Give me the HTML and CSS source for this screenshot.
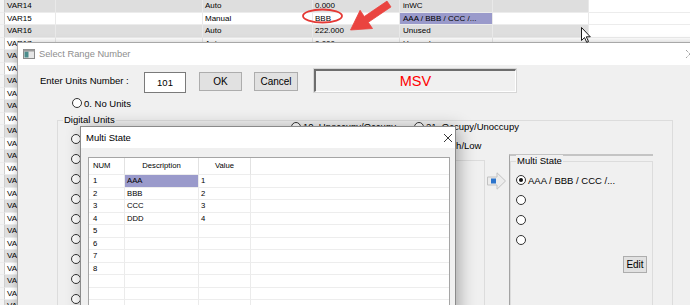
FILE: index.html
```html
<!DOCTYPE html>
<html lang="en">
<head>
  <meta charset="UTF-8">
  <title>Select Range Number</title>
  <link rel="stylesheet" href="styles.css">
</head>
<body>

  <!-- variable list behind the dialogs -->
  <div id="sheet" class="sheet"></div>

  <!-- Select Range Number dialog -->
  <div class="range-dlg">
    <div class="titlebar">
      <svg class="app-icon" width="12" height="10" viewBox="0 0 12 10">
        <rect x="0.5" y="0.5" width="11" height="9" fill="#e6e6e6" stroke="#8a8a8a"/>
        <rect x="1.5" y="2.5" width="4" height="6" fill="#4b8c8c"/>
        <rect x="0.5" y="0.5" width="11" height="2" fill="#9a9a9a"/>
      </svg>
      <span class="title-text">Select Range Number</span>
      <svg class="close-x" width="10" height="10" viewBox="0 0 10 10">
        <path d="M1 1 L9 9 M9 1 L1 9" stroke="#777" stroke-width="1" stroke-dasharray="1 1"/>
      </svg>
    </div>

    <div class="range-body">
      <div class="entry-row">
        <span class="entry-label">Enter Units Number :</span>
        <span class="units-input">101</span>
        <button class="btn ok-btn">OK</button>
        <button class="btn cancel-btn">Cancel</button>
        <div class="msv-box">MSV</div>
      </div>

      <div class="radio-row no-units">
        <span class="radio"></span><span>0. No Units</span>
      </div>

      <div class="group digital">
        <span class="group-label">Digital Units</span>
        <div class="du-body">
          <div class="col1">
            <div class="radio-row tall"><span class="radio"></span><span>1. Off/On</span></div>
            <div class="radio-row tall"><span class="radio"></span><span>2. Close/Open</span></div>
            <div class="radio-row tall"><span class="radio"></span><span>3. Stop/Start</span></div>
            <div class="radio-row tall"><span class="radio"></span><span>4. Disable/Enable</span></div>
            <div class="radio-row tall"><span class="radio"></span><span>5. Normal/Alarm</span></div>
            <div class="radio-row tall"><span class="radio"></span><span>6. Normal/High</span></div>
            <div class="radio-row tall"><span class="radio"></span><span>7. Normal/Low</span></div>
            <div class="radio-row tall"><span class="radio"></span><span>8. No/Yes</span></div>
            <div class="radio-row tall"><span class="radio"></span><span>9. Cool/Heat</span></div>
          </div>

          <div class="du-right">
            <div class="top-row">
              <div class="col2">
                <div class="radio-row mid"><span class="radio"></span><span>10. Unoccupy/Occupy</span></div>
                <div class="radio-row mid"><span class="radio"></span><span>11. Dehumidify/Humidify</span></div>
              </div>
              <div class="col3">
                <div class="radio-row mid"><span class="radio"></span><span>21. Occupy/Unoccupy</span></div>
                <div class="radio-row mid"><span class="radio"></span><span>22. High/Low</span></div>
              </div>
            </div>

            <div class="lower-row">
              <div class="frame"></div>
              <svg class="move-icon" width="19" height="18" viewBox="0 0 19 18">
                <polygon points="0.5,5 10,5 10,0.8 18.5,9 10,17.2 10,13 0.5,13" fill="#ececec" stroke="#c2c2c2"/>
                <rect x="4" y="6.5" width="5" height="5" fill="#2b74cc"/>
              </svg>
              <div class="ms-panel">
                <div class="group ms-group">
                  <span class="group-label">Multi State</span>
                  <div class="ms-radios">
                    <div class="radio-row tall"><span class="radio checked"></span><span>AAA / BBB / CCC /...</span></div>
                    <div class="radio-row tall"><span class="radio"></span></div>
                    <div class="radio-row tall"><span class="radio"></span></div>
                    <div class="radio-row tall"><span class="radio"></span></div>
                  </div>
                  <button class="btn edit-btn">Edit</button>
                </div>
              </div>
            </div>
          </div>
        </div>
      </div>
    </div>
  </div>

  <!-- Multi State dialog -->
  <div class="ms-dlg">
    <div class="titlebar ms-title">
      <span>Multi State</span>
      <svg class="ms-close" width="10" height="10" viewBox="0 0 10 10">
        <path d="M1 1 L9 9 M9 1 L1 9" stroke="#222" stroke-width="0.9"/>
      </svg>
    </div>
    <div class="ms-body">
      <div id="stateGrid" class="state-grid">
        <div class="grid-row grid-head">
          <span class="g-num">NUM</span>
          <span class="g-desc">Description</span>
          <span class="g-val">Value</span>
          <span class="g-rest"></span>
        </div>
      </div>
    </div>
  </div>

  <!-- annotation marks over the screenshot -->
  <svg class="marks" width="690" height="50" viewBox="0 0 690 50">
    <ellipse cx="322.5" cy="16" rx="19.5" ry="6.5" fill="none" stroke="#e53935" stroke-width="1.8"/>
    <polygon points="350.5,30 360.1,10.3 364.3,16.5 387,1.1 391,6.9 368.3,22.3 372.5,28.5" fill="#ea4440" stroke="#ea4440" stroke-width="0.8" stroke-linejoin="round"/>
    <path d="M581.5 27.5 L581.5 40.5 L584.5 37.6 L586.7 42.3 L588.5 41.5 L586.3 36.8 L590.3 36.8 Z" fill="#fff" stroke="#000" stroke-width="0.9" stroke-linejoin="round"/>
  </svg>

  <script>
    const sheetRows = [
      ['VAR14', 'Auto', '0.000', 'inWC'],
      ['VAR15', 'Manual', 'BBB', 'AAA / BBB / CCC /...'],
      ['VAR16', 'Auto', '222.000', 'Unused']
    ];
    for (let n = 17; n <= 38; n++) {
      sheetRows.push(['VAR' + n, 'Auto', '0.000', 'Unused']);
    }

    const states = [
      ['1', 'AAA', '1'], ['2', 'BBB', '2'], ['3', 'CCC', '3'], ['4', 'DDD', '4'],
      ['5', '', ''], ['6', '', ''], ['7', '', ''], ['8', '', ''],
      ['', '', ''], ['', '', ''], ['', '', ''], ['', '', '']
    ];

    function renderSheet() {
      const sheet = document.getElementById('sheet');
      sheetRows.forEach((r, i) => {
        const row = document.createElement('div');
        row.className = i % 2 === 0 ? 'row alt' : 'row';
        row.innerHTML = `
          <span class="c0"></span><span class="c1">${r[0]}</span><span class="c2"></span>
          <span class="c3">${r[1]}</span><span class="c4">${r[2]}</span>
          <span class="c5${i === 1 ? ' sel' : ''}">${r[3]}</span>
          <span class="c6"></span><span class="c7"></span>`;
        sheet.appendChild(row);
      });
    }

    function renderStates() {
      const grid = document.getElementById('stateGrid');
      states.forEach((s, i) => {
        const row = document.createElement('div');
        row.className = 'grid-row';
        row.innerHTML = `
          <span class="g-num">${s[0]}</span>
          <span class="g-desc${i === 0 ? ' sel' : ''}">${s[1]}</span>
          <span class="g-val">${s[2]}</span>
          <span class="g-rest"></span>`;
        grid.appendChild(row);
      });
    }

    renderSheet();
    renderStates();
  </script>

</body>
</html>
```

FILE: styles.css
```css
body {
  margin: 0;
  width: 690px;
  height: 305px;
  overflow: hidden;
  position: relative;
  font-family: "Liberation Sans", Arial, sans-serif;
  font-size: 9.5px;
  color: #000;
  background: #fff;
}

/* background variable list */
.sheet {
  width: 690px;
}
.row {
  display: flex;
  height: 12.5px;
  line-height: 12px;
  font-size: 8px;
  background: #fff;
}
.row span {
  box-sizing: border-box;
  height: 12.5px;
  padding-left: 2px;
  border-right: 1px solid #e9e9e9;
  border-bottom: 1px solid #ececec;
  white-space: nowrap;
  overflow: hidden;
}
.row.alt span {
  background: #dedede;
}
.row .c0 {
  width: 5px;
  padding: 0;
  background: #f4f4f4 !important;
  border-right-color: #cfcfcf;
}
.c1 { width: 51px; }
.c2 { width: 147px; }
.c3 { width: 110px; }
.c4 { width: 87px; }
.c5 { width: 93px; padding-left: 3px !important; }
.c6 { width: 96px; }
.row .c7 {
  flex: 1;
  background: #fff !important;
  border-right: none;
}
.row .c5.sel {
  background: #9a9acb;
}

/* Select Range Number dialog */
.range-dlg {
  position: absolute;
  left: 17px;
  top: 42px;
  width: 700px;
  height: 280px;
  border: 1px solid #a8a8a8;
  background: #f0f0f0;
  box-shadow: 0 0 7px rgba(0,0,0,0.22);
}
.titlebar {
  display: flex;
  align-items: center;
  height: 22px;
  background: #fff;
}
.app-icon {
  margin-left: 5px;
}
.title-text {
  margin-left: 4px;
  color: #8e8e8e;
  font-size: 9.3px;
}
.close-x {
  margin-left: auto;
  margin-right: 23px;
}

.range-body {
  padding-top: 4px;
}
.entry-row {
  display: flex;
  align-items: flex-start;
  height: 23px;
}
.entry-label {
  margin: 6px 0 0 22px;
  width: 104px;
  line-height: 12px;
}
.units-input {
  box-sizing: border-box;
  margin-top: 3px;
  width: 42px;
  height: 21px;
  line-height: 19px;
  border: 1px solid #7a7a7a;
  background: #fff;
  text-align: center;
}
.btn {
  box-sizing: border-box;
  padding: 0;
  height: 19px;
  border: 1px solid #adadad;
  background: #e1e1e1;
  font-family: "Liberation Sans", Arial, sans-serif;
  font-size: 10px;
  color: #000;
}
.ok-btn {
  margin: 3px 0 0 13px;
  width: 43px;
}
.cancel-btn {
  margin: 3px 0 0 12px;
  width: 44px;
}
.msv-box {
  box-sizing: border-box;
  margin-left: 16px;
  width: 202px;
  height: 23px;
  border-top: 2px solid #6d6d6d;
  border-left: 2px solid #6d6d6d;
  border-bottom: 1px solid #fff;
  border-right: 1px solid #fff;
  outline: 1px solid #d6d6d6;
  text-align: center;
  line-height: 20px;
  font-size: 14.5px;
  color: #f00;
}

/* radio buttons */
.radio-row {
  display: flex;
  align-items: center;
  height: 12px;
  white-space: nowrap;
}
.radio-row.tall { height: 20px; }
.radio-row.mid { height: 19px; }
.radio {
  box-sizing: border-box;
  flex: none;
  width: 10px;
  height: 10px;
  margin-right: 2px;
  border: 1px solid #333;
  border-radius: 50%;
  background: #fff;
  position: relative;
}
.radio.checked::after {
  content: "";
  position: absolute;
  left: 2px;
  top: 2px;
  width: 4px;
  height: 4px;
  border-radius: 50%;
  background: #111;
}
.no-units {
  margin: 5px 0 0 54px;
}

/* group boxes */
.group {
  box-sizing: border-box;
  border: 1px solid #dcdcdc;
}
.group-label {
  display: block;
  width: max-content;
  margin: -7px 0 0 5px;
  padding: 0 1px;
  line-height: 12px;
  background: #f0f0f0;
}
.digital {
  margin: 11px 0 0 39px;
  width: 616px;
  height: 240px;
}
.du-body {
  display: flex;
}
.col1 {
  margin-left: 13px;
  padding-top: 3px;
  width: 220px;
  overflow: hidden;
}
.du-right {
  display: flex;
  flex-direction: column;
  flex: 1;
}
.top-row {
  display: flex;
  margin-top: -9px;
  height: 37px;
}
.col2 {
  width: 123px;
}
.lower-row {
  display: flex;
  align-items: flex-start;
}
.frame {
  box-sizing: border-box;
  margin: 6px 0 0 9px;
  width: 185px;
  height: 200px;
  border: 1px solid #dcdcdc;
}
.move-icon {
  margin: 18px 0 0 2px;
}
.ms-panel {
  box-sizing: border-box;
  margin-left: 3px;
  width: 144px;
  height: 200px;
  border-top: 2px solid #c4c4c4;
  border-left: 1px solid #a3a3a3;
}
.ms-group {
  display: flex;
  flex-direction: column;
  margin-top: 5px;
  height: 190px;
}
.ms-radios {
  margin-left: 5px;
  padding-top: 3px;
}
.edit-btn {
  align-self: flex-end;
  margin: 6px 5px 0 0;
  width: 24px;
  height: 17px;
}

/* Multi State dialog */
.ms-dlg {
  position: absolute;
  left: 80px;
  top: 126px;
  width: 376px;
  height: 200px;
  box-sizing: border-box;
  border: 1px solid #8a8a8a;
  background: #f0f0f0;
  box-shadow: 3px 2px 16px rgba(0,0,0,0.32);
}
.ms-title {
  justify-content: space-between;
  height: 21px;
  padding-left: 5px;
}
.ms-close {
  margin-right: 2px;
}
.ms-body {
  padding: 9px 0 0 7px;
}
.state-grid {
  box-sizing: border-box;
  width: 362px;
  height: 170px;
  border: 1px solid #a5a5a5;
  background: #fff;
  font-size: 7.7px;
}
.grid-row {
  display: flex;
  height: 12.5px;
  line-height: 12px;
}
.grid-row span {
  box-sizing: border-box;
  border-right: 1px solid #ebebeb;
  border-bottom: 1px solid #ededed;
  padding-left: 2px;
  white-space: nowrap;
}
.grid-head {
  height: 17px;
  line-height: 16px;
}
.grid-head span {
  border-right-color: #e2e2e2;
}
.g-num { width: 36px; padding-left: 4px !important; }
.g-desc { width: 74px; }
.g-val { width: 52px; }
.grid-row .g-rest {
  flex: 1;
  border-right: none;
}
.grid-head .g-desc,
.grid-head .g-val {
  text-align: center;
  padding-left: 0;
}
.g-desc.sel {
  background: #9a9acb;
}

/* red annotations and mouse pointer */
.marks {
  position: absolute;
  left: 0;
  top: 0;
  pointer-events: none;
}
```
